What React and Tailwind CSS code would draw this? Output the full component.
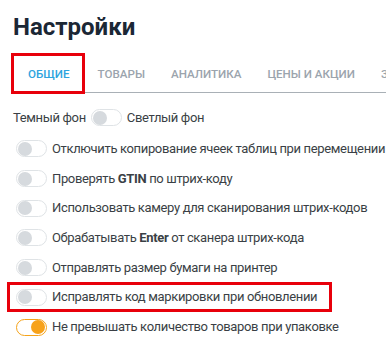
import React from 'react';

const tabs = ['ОБЩИЕ', 'ТОВАРЫ', 'АНАЛИТИКА', 'ЦЕНЫ И АКЦИИ', 'ЗАКАЗЫ'];

function Toggle({ on }) {
    return (
        <div
            className={`shrink-0 w-[31px] h-[17px] rounded-full border bg-white flex items-center px-[1px] ${
                on ? 'border-[#f5a31a] justify-end' : 'border-[#dfe3e6] justify-start'
            }`}
        >
            <div className={`w-[14px] h-[14px] rounded-full ${on ? 'bg-[#f7a21b]' : 'bg-[#d6dade]'}`}></div>
        </div>
    );
}

function Row({ on, children, marked }) {
    if (marked) {
        return (
            <div className="flex items-center gap-[5px] h-[30px] w-[325px] -ml-[9px] pl-[6px] border-[3px] border-[#e8000b]">
                <Toggle on={on} />
                <span className="whitespace-nowrap">{children}</span>
            </div>
        );
    }
    return (
        <div className="flex items-center gap-[5px] h-[29.7px]">
            <Toggle on={on} />
            <span className="whitespace-nowrap">{children}</span>
        </div>
    );
}

export default function App() {
    return (
        <div className="w-[386px] h-[349px] overflow-hidden bg-white pl-[13px] font-['Roboto',sans-serif] text-[#3a3f45]">
            <h1 className="pt-[13px] text-[24px] leading-[28px] font-bold text-[#1b2735]">Настройки</h1>

            <div className="mt-[12px] flex border-b-[1.5px] border-[#a9b0b6] whitespace-nowrap text-[11.6px] leading-[13px] font-medium uppercase">
                {tabs.map((t, i) =>
                    i === 0 ? (
                        <div
                            key={t}
                            className="-ml-[2px] -mb-[2px] h-[41px] pl-[14px] pr-[12px] pt-[12px] border-[3px] border-[#e8000b] text-[#2ea4de]"
                        >
                            {t}
                        </div>
                    ) : (
                        <div key={t} className="px-[13px] pt-[15px] h-[39px] text-[#9ba4ad]">
                            {t}
                        </div>
                    )
                )}
            </div>

            <div className="mt-[16px] text-[13px] leading-[16px] tracking-[-0.35px]">
                <div className="flex items-center gap-[5px] h-[17px]">
                    <span>Темный фон</span>
                    <Toggle />
                    <span>Светлый фон</span>
                </div>

                <div className="mt-[8px] pl-[3px] flex flex-col">
                    <Row>Отключить копирование ячеек таблиц при перемещении</Row>
                    <Row>
                        Проверять <b className="font-bold">GTIN</b> по штрих-коду
                    </Row>
                    <Row>Использовать камеру для сканирования штрих-кодов</Row>
                    <Row>
                        Обрабатывать <b className="font-bold">Enter</b> от сканера штрих-кода
                    </Row>
                    <Row>Отправлять размер бумаги на принтер</Row>
                    <Row marked>Исправлять код маркировки при обновлении</Row>
                    <Row on>Не превышать количество товаров при упаковке</Row>
                </div>
            </div>
        </div>
    );
}
